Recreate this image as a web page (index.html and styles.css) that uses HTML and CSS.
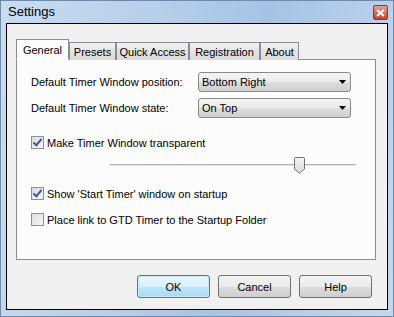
FILE: index.html
```html
<!DOCTYPE html>
<html lang="en">
<head>
    <meta charset="UTF-8">
    <title>Settings</title>
    <link rel="stylesheet" href="styles.css">
</head>
<body>
    <div class="window">
        <div class="titlebar">
            <span class="title">Settings</span>
            <div class="close">
                <svg width="9" height="8" viewBox="0 0 9 8">
                    <path d="M1 1 L8 7 M8 1 L1 7" stroke="#fff" stroke-width="2.2"/>
                </svg>
            </div>
        </div>
        <div class="client">
            <div class="tabs">
                <div class="tab active">General</div>
                <div class="tab presets">Presets</div>
                <div class="tab quick">Quick Access</div>
                <div class="tab reg">Registration</div>
                <div class="tab about">About</div>
            </div>
            <div class="panel">
                <div class="row">
                    <span class="label">Default Timer Window position:</span>
                    <div class="combo">
                        <span>Bottom Right</span>
                        <svg width="7" height="4" viewBox="0 0 7 4"><path d="M0 0 H7 L3.5 4 Z" fill="#000"/></svg>
                    </div>
                </div>
                <div class="row">
                    <span class="label">Default Timer Window state:</span>
                    <div class="combo">
                        <span>On Top</span>
                        <svg width="7" height="4" viewBox="0 0 7 4"><path d="M0 0 H7 L3.5 4 Z" fill="#000"/></svg>
                    </div>
                </div>

                <label class="check first">
                    <span class="box checked"></span>
                    Make Timer Window transparent
                </label>

                <div class="slider">
                    <div class="track"></div>
                    <svg class="thumb" width="11" height="17" viewBox="0 0 11 17">
                        <defs>
                            <linearGradient id="tg" x1="0" y1="0" x2="0" y2="1">
                                <stop offset="0" stop-color="#f4f4f4"/>
                                <stop offset="1" stop-color="#d8d8d8"/>
                            </linearGradient>
                        </defs>
                        <path d="M1.5 0.5 H9.5 Q10.5 0.5 10.5 1.5 V12 L5.5 16.5 L0.5 12 V1.5 Q0.5 0.5 1.5 0.5 Z" fill="url(#tg)" stroke="#707070"/>
                    </svg>
                </div>

                <label class="check second">
                    <span class="box checked"></span>
                    Show 'Start Timer' window on startup
                </label>
                <label class="check third">
                    <span class="box"></span>
                    Place link to GTD Timer to the Startup Folder
                </label>
            </div>
            <div class="buttons">
                <button class="default">OK</button>
                <button>Cancel</button>
                <button>Help</button>
            </div>
        </div>
    </div>
</body>
</html>
```

FILE: styles.css
```css
body {
    margin: 0;
    font-family: "Liberation Sans", Arial, sans-serif;
    font-size: 11px;
    color: #000;
}

.window {
    width: 394px;
    height: 317px;
    box-sizing: border-box;
    border: 1px solid #6f8aab;
    background: linear-gradient(100deg, #c9dcf0 0%, #b6cfea 35%, #a6c3e5 60%, #c3d7ee 100%);
    padding: 0 5px 6px 5px;
    display: flex;
    flex-direction: column;
}

.titlebar {
    height: 22px;
    display: flex;
    align-items: center;
    justify-content: space-between;
}

.title {
    font-size: 13px;
    color: #000;
    padding-left: 2px;
    margin-top: -2px;
}

.close {
    width: 15px;
    height: 15px;
    margin-top: 1px;
    box-sizing: border-box;
    border: 1px solid #8c3a2c;
    border-radius: 2px;
    background: linear-gradient(#e9a392, #d26e58 50%, #c0442a);
    display: flex;
    align-items: center;
    justify-content: center;
}

.client {
    flex: 1;
    border: 1px solid #000;
    background: #f0f0f0;
    padding: 15px 11px 0 9px;
    display: flex;
    flex-direction: column;
}

.tabs {
    display: flex;
    align-items: flex-end;
    height: 21px;
    position: relative;
    z-index: 1;
    margin-bottom: -1px;
}

.tab {
    height: 18px;
    box-sizing: border-box;
    border: 1px solid #898c95;
    border-bottom: none;
    padding-top: 2px;
    text-align: center;
    background: linear-gradient(#f2f2f2, #e3e3e3 50%, #d9d9d9);
    line-height: 14px;
}

.tab.active {
    width: 53px;
    height: 21px;
    padding-top: 3px;
    background: #fcfcfc;
    border-bottom: 1px solid #fcfcfc;
}

.tab.presets {
    width: 47px;
}

.tab.quick {
    width: 73px;
}

.tab.reg {
    width: 71px;
}

.tab.about {
    width: 39px;
}

.panel {
    height: 201px;
    box-sizing: border-box;
    border: 1px solid #898c95;
    background: #fcfcfc;
    padding: 12px 0 0 14px;
}

.row {
    display: flex;
    align-items: center;
    height: 20px;
    margin-bottom: 6px;
}

.label {
    width: 167px;
}

.combo {
    width: 153px;
    height: 20px;
    box-sizing: border-box;
    border: 1px solid #8a8a8a;
    border-radius: 3px;
    background: linear-gradient(#f3f3f3, #ebebeb 50%, #dddddd 51%, #cfcfcf);
    display: flex;
    align-items: center;
    justify-content: space-between;
    padding: 0 4px 0 3px;
}

.check {
    display: flex;
    align-items: center;
    gap: 3px;
    height: 13px;
}

.check.first {
    margin-top: 18px;
}

.check.second {
    margin-top: 13px;
}

.check.third {
    margin-top: 13px;
}

.box {
    width: 13px;
    height: 13px;
    box-sizing: border-box;
    border: 1px solid #8e8f8f;
    background: linear-gradient(135deg, #dcdcdc, #f6f6f6);
    position: relative;
}

.box.checked::after {
    content: "";
    position: absolute;
    left: 3px;
    top: 0px;
    width: 3px;
    height: 7px;
    border: solid #3d5ba0;
    border-width: 0 2px 2px 0;
    transform: rotate(40deg);
}

.slider {
    margin: 8px 0 0 79px;
    width: 246px;
    height: 17px;
    position: relative;
    display: flex;
    align-items: center;
}

.track {
    width: 100%;
    height: 1px;
    background: #b0b0b0;
    border-bottom: 1px solid #e4e4e4;
    margin-top: -2px;
}

.thumb {
    position: absolute;
    left: 184px;
    top: 0;
}

.buttons {
    display: flex;
    justify-content: flex-end;
    gap: 8px;
    margin-top: 15px;
    margin-right: 4px;
}

button {
    width: 73px;
    height: 23px;
    font-family: inherit;
    font-size: 11px;
    border: 1px solid #707070;
    border-radius: 3px;
    background: linear-gradient(#f2f2f2, #ebebeb 50%, #dddddd 51%, #cfcfcf);
    padding: 0;
}

button.default {
    border-color: #3c7fb1;
    background: linear-gradient(#eaf6fd, #d9f0fc 50%, #bee6fd 51%, #a7d9f5);
    box-shadow: inset 0 0 0 1px #c8e8f8;
}
```
